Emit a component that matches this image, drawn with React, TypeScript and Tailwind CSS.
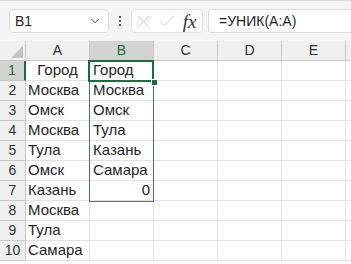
import { ChevronDown, X, Check } from "lucide-react";

const colA = ["Город", "Москва", "Омск", "Москва", "Тула", "Омск", "Казань", "Москва", "Тула", "Самара"];
const colB = ["Город", "Москва", "Омск", "Тула", "Казань", "Самара", "0", "", "", ""];
const cols = ["A", "B", "C", "D", "E"];

export default function App() {
  return (
    <div className="w-[351px] h-[264px] overflow-hidden bg-white text-[#1f1f1f] font-['Liberation_Sans',Arial,sans-serif]">
      {/* formula bar */}
      <div className="h-[41px] bg-[#f5f5f5] border-t border-[#d9d9d9] flex items-start pt-[8px] pl-[9px] gap-0">
        <div className="w-[100px] h-[24px] bg-white border border-[#dcdcdc] rounded-[4px] flex items-center justify-between pl-[5px] pr-[6px]">
          <span className="text-[14px]">B1</span>
          <ChevronDown size={14} strokeWidth={1.6} className="text-[#333]" />
        </div>
        <div className="w-[22px] h-[24px] flex flex-col items-center justify-center gap-[2px]">
          <div className="w-[2px] h-[2px] bg-[#555]" />
          <div className="w-[2px] h-[2px] bg-[#555]" />
          <div className="w-[2px] h-[2px] bg-[#555]" />
        </div>
        <div className="w-[72px] h-[24px] bg-white border border-[#e3e3e3] rounded-[4px] flex items-center pl-[0px]">
          <div className="w-[23px] flex justify-center">
            <X size={21} strokeWidth={1} className="text-[#c4c4c4]" />
          </div>
          <div className="w-[23px] flex justify-center">
            <Check size={20} strokeWidth={1} className="text-[#c4c4c4]" />
          </div>
          <div className="w-[23px] flex justify-center">
            <span className="font-['Liberation_Serif',serif] italic text-[19px] text-[#333] leading-none">fx</span>
          </div>
        </div>
        <div className="ml-[5px] flex-1 h-[24px] bg-white border border-[#dcdcdc] rounded-l-[4px] border-r-0 flex items-center pl-[10px]">
          <span className="text-[14px]">=УНИК(A:A)</span>
        </div>
      </div>

      {/* grid */}
      <div className="relative">
        <div className="grid grid-cols-[26px_64px_64px_64px_64px_64px_30px]">
          <div className="h-[20px] bg-[#f0f0f0] border-r border-b border-[#c8c8c8] relative overflow-hidden">
            <div className="absolute right-[2px] bottom-[2px] w-0 h-0 border-l-[12px] border-l-transparent border-b-[12px] border-b-[#c3c3c3]" />
          </div>
          {cols.map((c) => (
            <div
              key={c}
              className={
                c === "B"
                  ? "h-[20px] bg-[#d3d3d3] border-r border-b border-[#c8c8c8] flex items-center justify-center text-[14px] text-[#1e6b40]"
                  : "h-[20px] bg-[#f0f0f0] border-r border-b border-[#c8c8c8] flex items-center justify-center text-[14px] text-[#333]"
              }
            >
              {c}
            </div>
          ))}
          <div className="h-[20px] bg-[#f0f0f0] border-b border-[#c8c8c8]" />

          {colA.map((a, i) => (
            <Row key={i} n={i + 1} a={a} b={colB[i]} />
          ))}
        </div>

        {/* spill range */}
        <div className="absolute left-[89px] top-[20px] w-[65px] h-[141px] border border-[#3a6fc4] pointer-events-none" />
        {/* active cell */}
        <div className="absolute left-[88px] top-[19px] w-[66px] h-[22px] border-2 border-[#1e6b40] pointer-events-none" />
        <div className="absolute left-[151px] top-[38px] w-[5px] h-[5px] bg-[#1e6b40] border border-white box-content" />
      </div>
    </div>
  );
}

function Row({ n, a, b }: { n: number; a: string; b: string }) {
  const active = n === 1;
  return (
    <>
      <div
        className={
          active
            ? "h-[20px] bg-[#d3d3d3] border-r-2 border-r-[#1e6b40] border-b border-b-[#c8c8c8] flex items-center justify-center text-[14px] text-[#1e6b40]"
            : "h-[20px] bg-[#f0f0f0] border-r border-b border-[#c8c8c8] flex items-center justify-center text-[14px] text-[#333]"
        }
      >
        {n}
      </div>
      <div
        className={
          active
            ? "h-[20px] border-r border-b border-[#e1e1e1] flex items-center justify-center text-[15px] whitespace-nowrap"
            : "h-[20px] border-r border-b border-[#e1e1e1] flex items-center pl-[2px] text-[15px] whitespace-nowrap"
        }
      >
        {a}
      </div>
      <div
        className={
          b === "0"
            ? "h-[20px] border-r border-b border-[#e1e1e1] flex items-center justify-end pr-[3px] text-[15px]"
            : "h-[20px] border-r border-b border-[#e1e1e1] flex items-center pl-[3px] text-[15px] whitespace-nowrap"
        }
      >
        {b}
      </div>
      <div className="h-[20px] border-r border-b border-[#e1e1e1]" />
      <div className="h-[20px] border-r border-b border-[#e1e1e1]" />
      <div className="h-[20px] border-r border-b border-[#e1e1e1]" />
      <div className="h-[20px] border-b border-[#e1e1e1]" />
    </>
  );
}
